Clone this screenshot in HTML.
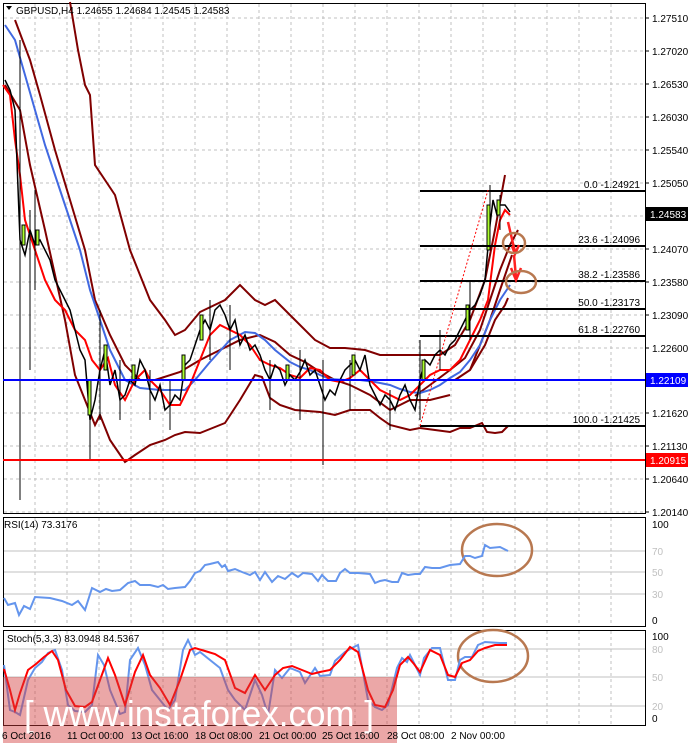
<!DOCTYPE html>
<html><head><meta charset="utf-8"><style>
html,body{margin:0;padding:0;background:#fff;}
body{width:688px;height:746px;overflow:hidden;position:relative;font-family:"Liberation Sans",sans-serif;}
svg{position:absolute;left:0;top:0;}
</style></head><body>
<svg width="688" height="746" viewBox="0 0 688 746" font-family="Liberation Sans, sans-serif" font-size="10">
<g stroke="#c0c0c0" stroke-dasharray="3,3" stroke-width="1">
<path d="M35 4V513M67 4V513M99 4V513M131 4V513M163 4V513M195 4V513M227 4V513M259 4V513M291 4V513M323 4V513M355 4V513M387 4V513M419 4V513M451 4V513M483 4V513M515 4V513M547 4V513M579 4V513M611 4V513"/>
<path d="M4 18H645M4 51H645M4 84H645M4 117H645M4 150H645M4 183H645M4 216H645M4 249H645M4 282H645M4 315H645M4 348H645M4 413H645M4 446H645M4 479H645M4 512H645"/>
<path d="M35 518V626M67 518V626M99 518V626M131 518V626M163 518V626M195 518V626M227 518V626M259 518V626M291 518V626M323 518V626M355 518V626M387 518V626M419 518V626M451 518V626M483 518V626M515 518V626M547 518V626M579 518V626M611 518V626"/>
<path d="M35 631V724M67 631V724M99 631V724M131 631V724M163 631V724M195 631V724M227 631V724M259 631V724M291 631V724M323 631V724M355 631V724M387 631V724M419 631V724M451 631V724M483 631V724M515 631V724M547 631V724M579 631V724M611 631V724"/>
</g>
<g stroke="#c0c0c0" stroke-width="1">
<path d="M4 551H645M4 572H645M4 594H645M4 649H645M4 677H645M4 706H645"/>
</g>
<g fill="none" stroke="#000" stroke-width="1">
<rect x="3.5" y="3.5" width="642" height="510"/>
<rect x="3.5" y="517.5" width="642" height="109"/>
<rect x="3.5" y="630.5" width="642" height="95"/>
</g>
<g fill="none" stroke="#800000" stroke-width="2">
<polyline points="70,2 78,50 85,85 90,95 95,165 105,180 115,195 130,250 150,300 165,320 175,335 185,330 200,312 225,300 240,285 255,300 265,305 275,300 295,320 315,340 330,348 345,348 365,350 380,355 400,355 420,355 440,355 455,345 470,320 485,280 495,230 505,175"/>
<polyline points="15,20 30,60 40,95 55,150 70,200 85,250 95,300 110,335 125,365 140,380 155,380 180,372 200,360 220,350 240,340 260,335 275,342 290,355 305,362 320,372 335,380 350,385 370,395 390,410 410,400 430,400 450,395"/>
<polyline points="5,85 20,110 30,165 45,230 65,320 75,375 85,400 95,425 100,415 110,440 125,462 135,455 150,445 165,440 175,435 185,432 200,433 225,423 240,400 255,375 262,377 270,398 280,405 295,410 320,412 335,415 350,410 370,410 380,418 390,425 410,430 420,428"/>
<polyline points="420,428 435,430 450,432 460,428 470,428 482,423 487,432 495,433 502,432 508,426"/>
<polyline points="415,396 430,385 450,370 465,358 480,330 490,300 500,270 510,245 518,230"/>
<polyline points="455,380 470,370 485,345 495,320 505,305 508,298"/>
<polyline points="470,370 490,320 500,290 512,255"/>
</g>
<polyline fill="none" stroke="#4169e1" stroke-width="2" points="5,25 15,40 25,75 35,110 45,145 55,175 70,220 80,250 90,290 100,320 110,350 125,380 140,388 160,390 170,390 185,390 195,380 210,362 230,340 245,332 255,333 265,340 275,350 290,362 300,367 310,370 320,375 330,379 345,380 360,380 375,382 390,385 400,389 410,392 420,393 430,390 440,385 450,378 460,372 470,360 480,345 490,320 500,300 510,285"/>
<polyline fill="none" stroke="#ff0000" stroke-width="2" points="3,85 10,95 15,140 20,175 25,220 35,250 45,280 55,300 65,310 75,330 85,340 92,360 100,370 108,358 115,385 125,400 135,380 145,370 150,380 160,390 170,405 180,405 190,385 200,360 210,335 220,325 230,330 240,335 250,345 260,360 270,365 280,368 290,375 300,378 310,368 320,370 330,380 340,382 350,378 360,370 370,380 380,390 390,395 400,400 410,395 420,385 430,375 440,370 450,370 460,360 470,340 480,320 488,300 495,245 500,220 505,210 510,215"/>
<polyline fill="none" stroke="#000" stroke-width="1.5" points="5,80 10,90 15,110 20,240 25,255 30,230 35,245 40,240 45,250 50,260 55,280 60,290 65,300 70,310 75,330 80,350 85,360 90,420 95,400 100,370 105,350 110,385 115,370 120,400 125,395 130,380 135,385 140,360 145,370 150,390 155,400 160,385 165,410 170,405 175,395 180,400 185,365 190,360 195,345 200,330 205,320 210,330 215,310 220,305 225,315 230,330 235,320 240,345 245,335 250,350 255,345 260,355 265,370 270,380 275,365 280,370 285,385 290,375 295,380 300,372 305,360 310,375 315,370 320,385 325,400 330,390 335,395 340,380 345,370 350,365 355,360 360,370 365,355 370,385 375,395 380,405 385,395 390,400 395,410 400,395 405,385 410,400 415,410 420,380 425,360 430,365 435,355 440,350 445,355 450,345 455,340 460,330 465,320 470,310 475,305 480,295 485,280 490,225 493,200 497,215 500,205 505,205 510,212"/>
<g stroke="#000" stroke-width="1">
<path d="M20 40V500M30 210V370M90 400V460M35 190V290M100 310V420M120 360V420M150 370V420M170 380V430M210 300V360M230 305V370M270 360V410M300 350V420M323 360V465M350 360V410M390 390V430M420 340V420M440 330V370M470 280V340M490 185V250M500 195V230"/>
</g>
<g fill="#adff2f" stroke="#000" stroke-width="1">
<rect x="22" y="225" width="3" height="20"/><rect x="36" y="230" width="3" height="15"/><rect x="88" y="380" width="3" height="35"/><rect x="104" y="345" width="3" height="25"/><rect x="132" y="365" width="3" height="15"/><rect x="182" y="355" width="3" height="25"/><rect x="200" y="315" width="3" height="25"/><rect x="286" y="365" width="3" height="15"/><rect x="352" y="355" width="3" height="20"/><rect x="422" y="360" width="3" height="20"/><rect x="466" y="305" width="3" height="25"/><rect x="487" y="205" width="3" height="45"/><rect x="497" y="200" width="3" height="15"/>
</g>
<g stroke="#000" stroke-width="2">
<path d="M420 191H645M420 246H645M420 281H645M420 309H645M420 336H645M420 426H645"/>
</g>
<path d="M420 426 L488 190" stroke="#ff0000" stroke-width="1" stroke-dasharray="2,2" fill="none"/>
<line x1="3" y1="380" x2="645" y2="380" stroke="#0000ff" stroke-width="2"/>
<line x1="3" y1="460" x2="645" y2="460" stroke="#ff0000" stroke-width="2"/>
<g font-size="10" fill="#000" text-anchor="end">
<text x="640" y="188">0.0 -1.24921</text>
<text x="640" y="243">23.6 -1.24096</text>
<text x="640" y="278">38.2 -1.23586</text>
<text x="640" y="306">50.0 -1.23173</text>
<text x="640" y="333">61.8 -1.22760</text>
<text x="640" y="423">100.0 -1.21425</text>
</g>
<g stroke="#ff2020" stroke-width="2.5" fill="none">
<path d="M508 222 L515 252M512 246 L515 254 L519 245"/>
<path d="M514 255 L516 278M511 268 L516 280 L521 268"/>
</g>
<g stroke="#b87850" stroke-width="2.5" fill="none">
<ellipse cx="514" cy="243" rx="11" ry="10"/>
<ellipse cx="521" cy="282" rx="15" ry="11"/>
<ellipse cx="497" cy="550" rx="35" ry="26"/>
<ellipse cx="493" cy="656" rx="35" ry="26"/>
</g>
<polyline fill="none" stroke="#6495ed" stroke-width="2" points="4,598 8,605 15,603 19,615 24,606 30,609 35,597 50,598 62,601 72,605 78,601 85,610 92,588 100,592 106,589 112,591 120,590 128,583 135,581 140,585 150,585 158,587 163,585 168,589 175,588 185,587 190,581 195,573 200,571 205,565 210,564 218,562 222,567 225,565 228,571 235,569 242,572 250,575 255,572 260,580 265,572 272,582 278,576 285,579 292,573 298,577 303,573 312,574 318,581 322,575 328,581 336,581 340,573 345,569 350,573 358,573 370,574 375,583 380,581 385,580 392,582 398,582 402,573 408,575 415,574 420,574 425,567 432,568 440,568 450,565 460,564 465,556 470,556 475,558 482,556 485,545 490,548 500,547 508,551"/>
<polyline fill="none" stroke="#6495ed" stroke-width="2" points="4,665 10,710 15,712 20,715 28,680 35,668 42,662 48,653 55,650 62,670 68,705 75,711 85,712 92,705 98,655 104,665 110,690 120,714 125,712 130,660 138,648 145,665 152,690 160,700 168,710 175,700 183,650 188,640 195,655 200,652 210,660 220,668 228,690 235,700 245,710 255,680 262,695 268,715 275,670 282,678 290,668 300,672 305,683 315,668 320,676 330,675 335,661 345,652 352,648 358,645 368,700 375,707 382,710 388,705 397,668 402,658 407,662 410,655 420,675 424,658 432,648 440,648 448,680 455,680 460,660 465,657 472,657 478,645 485,642 500,643 507,643"/>
<polyline fill="none" stroke="#ff0000" stroke-width="2" points="4,669 10,690 15,710 20,693 28,670 36,664 44,657 52,651 58,660 66,690 75,706 85,707 92,702 100,680 108,658 115,675 125,705 135,672 143,655 150,675 160,688 170,705 180,680 190,650 195,648 205,651 215,654 225,660 235,688 245,693 255,675 265,690 275,675 283,668 292,666 302,670 312,674 320,672 330,670 340,660 350,647 358,652 368,690 375,705 385,707 393,690 400,665 408,657 414,664 420,672 430,650 440,655 448,675 455,677 462,663 470,660 478,651 485,648 495,645 507,645"/>
<rect x="3" y="677" width="394" height="66" fill="rgba(210,60,60,0.45)"/>
<text x="24" y="726" font-size="36" fill="#fff" textLength="350" lengthAdjust="spacingAndGlyphs">[ www.instaforex.com ]</text>
<text x="16" y="14" font-size="10" fill="#000">GBPUSD,H4  1.24655 1.24684 1.24545 1.24583</text>
<path d="M6 6 L12 6 L9 10Z" fill="#000"/>
<g font-size="10" fill="#000" text-anchor="start">
<text x="652" y="22">1.27510</text><text x="652" y="55">1.27020</text><text x="652" y="88">1.26530</text><text x="652" y="121">1.26030</text><text x="652" y="154">1.25540</text><text x="652" y="187">1.25050</text><text x="652" y="253">1.24070</text><text x="652" y="286">1.23580</text><text x="652" y="319">1.23090</text><text x="652" y="352">1.22600</text><text x="652" y="417">1.21620</text><text x="652" y="450">1.21130</text><text x="652" y="483">1.20640</text><text x="652" y="516">1.20140</text>
<text x="652" y="528">100</text><text x="652" y="624">0</text><text x="652" y="640">100</text><text x="652" y="722">0</text>
</g>
<g font-size="10" fill="#c0c0c0"><text x="652" y="555">70</text><text x="652" y="576">50</text><text x="652" y="598">30</text><text x="652" y="653">80</text><text x="652" y="681">50</text><text x="652" y="710">20</text></g>
<rect x="646" y="207" width="42" height="14" fill="#000"/><text x="650" y="218" fill="#fff">1.24583</text>
<rect x="646" y="373" width="42" height="14" fill="#0000ff"/><text x="650" y="384" fill="#fff">1.22109</text>
<rect x="646" y="453" width="42" height="14" fill="#ff0000"/><text x="650" y="464" fill="#fff">1.20915</text>
<g stroke="#000"><path d="M645 18h4M645 51h4M645 84h4M645 117h4M645 150h4M645 183h4M645 249h4M645 282h4M645 315h4M645 348h4M645 413h4M645 446h4M645 479h4M645 512h4"/></g>
<text x="4" y="528" font-size="10">RSI(14) 73.3176</text>
<text x="7" y="642" font-size="10">Stoch(5,3,3) 83.0948 84.5367</text>
<g font-size="10" fill="#000">
<text x="2" y="739">6 Oct 2016</text><text x="67" y="739">11 Oct 00:00</text><text x="131" y="739">13 Oct 16:00</text><text x="195" y="739">18 Oct 08:00</text><text x="259" y="739">21 Oct 00:00</text><text x="322" y="739">25 Oct 16:00</text><text x="387" y="739">28 Oct 08:00</text><text x="451" y="739">2 Nov 00:00</text>
</g>
</svg>
</body></html>
